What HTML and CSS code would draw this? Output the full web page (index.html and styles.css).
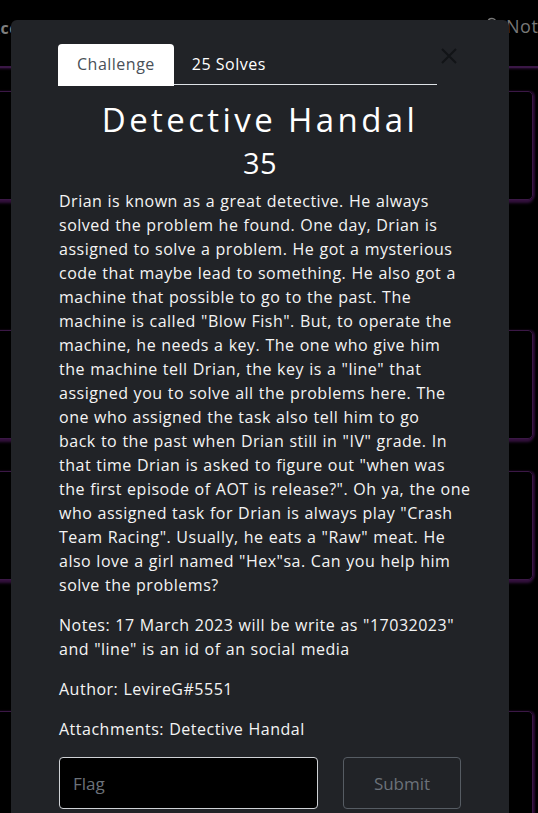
FILE: index.html
```html
<!DOCTYPE html>
<html lang="en">
<head>
<meta charset="utf-8">
<title>Detective Handal</title>
<link rel="stylesheet" href="styles.css">
</head>
<body>
<div class="page">
  <nav class="navbar">
    <span class="brand">Accounts</span>
    <span class="nav-right">
      <svg class="bell" width="14" height="16" viewBox="0 0 14 16"><path d="M7 1.5c-2.6 0-4.3 2-4.3 4.6v3.6L1.2 11.5h11.6l-1.5-1.8V6.1C11.3 3.5 9.6 1.5 7 1.5z" fill="none" stroke="#777" stroke-width="1.3"/><path d="M5.5 13.2a1.5 1.5 0 0 0 3 0" fill="none" stroke="#777" stroke-width="1.3"/></svg>
      <span class="nav-link">Notifications</span>
    </span>
  </nav>
  <div class="board">
    <div class="card c1"></div>
    <div class="card c2"></div>
    <div class="card c3"></div>
    <div class="card c4"></div>
  </div>
</div>

<div class="modal">
  <div class="modal-content">
    <div class="head">
      <ul class="tabs">
        <li class="tab active">Challenge</li>
        <li class="tab">25 Solves</li>
      </ul>
      <button class="close" aria-label="Close">
        <svg width="16" height="16" viewBox="0 0 16 16"><path d="M1 1l14 14M15 1L1 15" stroke="#121417" stroke-width="2" fill="none"/></svg>
      </button>
    </div>
    <h2 class="title">Detective Handal</h2>
    <h3 class="value">35</h3>
    <div class="desc">
      <p>Drian is known as a great detective. He always<br>solved the problem he found. One day, Drian is<br>assigned to solve a problem. He got a mysterious<br>code that maybe lead to something. He also got a<br>machine that possible to go to the past. The<br>machine is called "Blow Fish". But, to operate the<br>machine, he needs a key. The one who give him<br>the machine tell Drian, the key is a "line" that<br>assigned you to solve all the problems here. The<br>one who assigned the task also tell him to go<br>back to the past when Drian still in "IV" grade. In<br>that time Drian is asked to figure out "when was<br>the first episode of AOT is release?". Oh ya, the one<br>who assigned task for Drian is always play "Crash<br>Team Racing". Usually, he eats a "Raw" meat. He<br>also love a girl named "Hex"sa. Can you help him<br>solve the problems?</p>
      <p>Notes: 17 March 2023 will be write as "17032023"<br>and "line" is an id of an social media</p>
      <p>Author: LevireG#5551</p>
      <p>Attachments: Detective Handal</p>
    </div>
    <form class="submit-row">
      <input class="flag" type="text" placeholder="Flag">
      <button class="submit" type="button">Submit</button>
    </form>
  </div>
</div>
</body>
</html>
```
FILE: styles.css
```css
* { box-sizing: border-box; }
html, body { margin: 0; padding: 0; }
body {
  background: #000;
  width: 538px;
  height: 813px;
  overflow: hidden;
  position: relative;
  font-family: "Open Sans", "DejaVu Sans", sans-serif;
  letter-spacing: 0.5px;
}
.page { width: 538px; }
.navbar {
  height: 68px;
  display: flex;
  justify-content: space-between;
  align-items: flex-start;
  padding-top: 14px;
  border-bottom: 2px solid #3a1746;
  box-shadow: 0 1px 2px #2a0f33;
  margin-left: -11px;
  margin-right: -80px;
}
.brand {
  color: #7e7e7e;
  font-weight: 700;
  font-size: 16px;
  margin-top: 3px;
}
.nav-right { display: flex; align-items: flex-start; gap: 7px; margin-right: 2px; }
.bell { margin-top: 3px; }
.nav-link { color: #777; font-size: 18px; width: 110px; }
.board {
  display: flex;
  flex-direction: column;
  margin-left: -20px;
  width: 553px;
  padding-top: 23px;
}
.card {
  height: 109px;
  border: 1px solid #3b1846;
  border-radius: 5px;
  box-shadow: 0 3px 3px #35113f, 2px 0 2px #2a0d33;
}
.c2 { margin-top: 130px; }
.c3 { margin-top: 32px; }
.c4 { margin-top: 131px; }

.modal {
  position: absolute;
  left: 11px;
  top: 20px;
  width: 498px;
  height: 820px;
  background: #212327;
  border-radius: 6px;
}
.modal-content { padding: 24px 48px 0 48px; color: #fff; }
.head { display: flex; align-items: flex-start; justify-content: space-between; }
.tabs {
  list-style: none;
  margin: 0;
  padding: 0;
  display: flex;
  width: 378px;
  border-bottom: 1px solid #dee2e6;
  height: 41px;
}
.tab {
  font-size: 16px;
  padding: 0 18px;
  height: 42px;
  line-height: 41px;
  color: #fff;
}
.tab.active {
  background: #fff;
  color: #495057;
  border-radius: 4px 4px 0 0;
  margin-left: -1px;
  padding: 0 19px;
}
.close {
  background: none;
  border: 0;
  padding: 0;
  margin: 4px 4px 0 0;
  width: 16px;
  height: 16px;
  line-height: 0;
}
.title {
  text-align: center;
  font-weight: 400;
  font-size: 33px;
  letter-spacing: 3.4px;
  margin: 15px 0 0;
  line-height: 40px;
}
.value {
  text-align: center;
  font-weight: 400;
  font-size: 29px;
  margin: 5px 0 0;
  line-height: 36px;
}
.desc { margin-top: 8px; }
.desc p {
  margin: 0 0 16px;
  font-size: 16px;
  line-height: 24px;
  color: #f4f4f4;
  word-spacing: 0.5px;
  white-space: nowrap;
}
.submit-row {
  display: flex;
  justify-content: space-between;
  margin-top: 1px;
}
.flag {
  width: 259px;
  height: 52px;
  background: #000;
  border: 1px solid #cfd2d6;
  border-radius: 4px;
  padding: 0 13px;
  font: inherit;
  font-size: 17px;
  color: #fff;
}
.flag::placeholder { color: #6c727a; }
.submit {
  width: 118px;
  height: 52px;
  background: transparent;
  border: 1px solid #565c63;
  border-radius: 4px;
  color: #6c727a;
  font: inherit;
  font-size: 17px;
}
```
